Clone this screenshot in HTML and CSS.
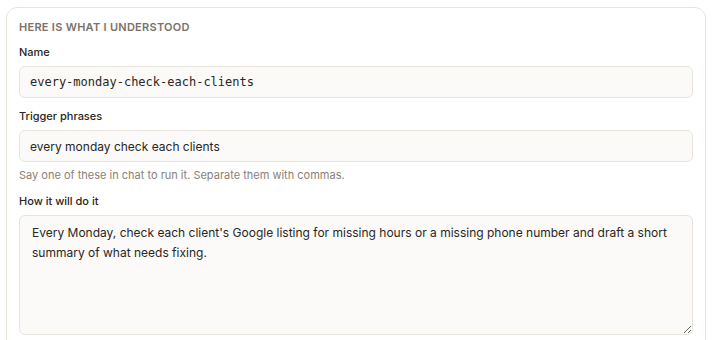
FILE: index.html
```html
<!DOCTYPE html>
<html>
<head>
<meta charset="utf-8">
<link rel="stylesheet" href="styles.css">
</head>
<body>
<div class="card">
  <div class="heading">HERE IS WHAT I UNDERSTOOD</div>
  <div class="field">
    <label class="label">Name</label>
    <input class="input mono" type="text" value="every-monday-check-each-clients">
  </div>
  <div class="field">
    <label class="label">Trigger phrases</label>
    <input class="input" type="text" value="every monday check each clients">
    <div class="help">Say one of these in chat to run it. Separate them with commas.</div>
  </div>
  <div class="field">
    <label class="label">How it will do it</label>
    <textarea class="textarea">Every Monday, check each client's Google listing for missing hours or a missing phone number and draft a short summary of what needs fixing.</textarea>
  </div>
</div>
</body>
</html>
```

FILE: styles.css
```css
* { box-sizing: border-box; }
html, body { margin: 0; padding: 0; background: #ffffff; }
body {
  padding: 7px 10px 0 6px;
  font-family: Inter, "Noto Sans", sans-serif;
  color: #2a2622;
}
.card {
  width: 700px;
  border: 1px solid #e8e4dc;
  border-radius: 11px;
  padding: 12px 12px 12px 12px;
  background: #fff;
}
.heading {
  font-size: 11px;
  line-height: 14px;
  font-weight: 600;
  letter-spacing: 0.025em;
  color: #7a7168;
  margin-bottom: 10px;
}
.field { display: flex; flex-direction: column; margin-bottom: 10px; }
.label {
  font-size: 11px;
  line-height: 16px;
  font-weight: 500;
  color: #2a2622;
  margin-bottom: 6px;
}
.input, .textarea {
  width: 100%;
  border: 1px solid #e8e4dc;
  border-radius: 6px;
  background: #fbfaf8;
  color: #2a2622;
  font-family: Inter, "Noto Sans", sans-serif;
  font-size: 12px;
  outline: none;
}
.input { height: 32px; padding: 0 10px; }
.mono { font-family: "DejaVu Sans Mono", monospace; font-size: 12px; }
.help {
  font-size: 11px;
  line-height: 15px;
  color: #8a8178;
  margin-top: 6px;
}
.textarea {
  height: 120px;
  padding: 7px 12px;
  line-height: 20px;
  resize: vertical;
  display: block;
}
```
